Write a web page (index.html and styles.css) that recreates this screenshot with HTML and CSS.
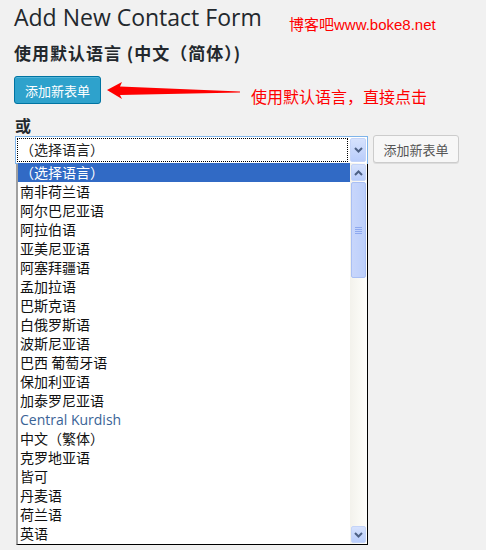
FILE: index.html
```html
<!DOCTYPE html>
<html>
	<head>
		<meta charset="UTF-8">
		<title>Add New Contact Form</title>
		<link rel="stylesheet" href="styles.css">
	</head>
	<body>
		<div class="wrap">
			<h1 class="title">Add New Contact Form</h1>
			<span class="mark">博客吧www.boke8.net</span>
			<h3 class="sub">使用默认语言 (中文（简体）)</h3>
			<div class="row">
				<button class="btn-primary">添加新表单</button>
				<svg class="arrow" width="136" height="20" viewBox="0 0 136 20">
					<polygon points="1,9 16,1 14,5.5 134,10.5 134,11.5 14,14 16,18" fill="#ff0000"/>
				</svg>
				<span class="note">使用默认语言，直接点击</span>
			</div>
			<h3 class="or">或</h3>
			<div class="row2">
				<div class="select">
					<div class="select-val">（选择语言）</div>
					<div class="select-btn">
						<svg width="9" height="6" viewBox="0 0 9 6"><path d="M1 1 L4.5 4.5 L8 1" stroke="#4d6185" stroke-width="2" fill="none"/></svg>
					</div>
				</div>
				<button class="btn">添加新表单</button>
			</div>
			<div class="list">
				<ul class="opts">
					<li class="on">（选择语言）</li>
					<li>南非荷兰语</li>
					<li>阿尔巴尼亚语</li>
					<li>阿拉伯语</li>
					<li>亚美尼亚语</li>
					<li>阿塞拜疆语</li>
					<li>孟加拉语</li>
					<li>巴斯克语</li>
					<li>白俄罗斯语</li>
					<li>波斯尼亚语</li>
					<li>巴西 葡萄牙语</li>
					<li>保加利亚语</li>
					<li>加泰罗尼亚语</li>
					<li class="latin">Central Kurdish</li>
					<li>中文（繁体）</li>
					<li>克罗地亚语</li>
					<li>皆可</li>
					<li>丹麦语</li>
					<li>荷兰语</li>
					<li>英语</li>
				</ul>
				<div class="sb">
					<div class="sb-btn">
						<svg width="9" height="6" viewBox="0 0 9 6"><path d="M1 5 L4.5 1.5 L8 5" stroke="#4d6185" stroke-width="2" fill="none"/></svg>
					</div>
					<div class="sb-thumb"><i></i><i></i><i></i><i></i></div>
					<div class="sb-track"></div>
					<div class="sb-btn">
						<svg width="9" height="6" viewBox="0 0 9 6"><path d="M1 1 L4.5 4.5 L8 1" stroke="#4d6185" stroke-width="2" fill="none"/></svg>
					</div>
				</div>
			</div>
		</div>
	</body>
</html>
```
FILE: styles.css
```css
*{margin: 0;padding: 0;box-sizing: border-box;}
ul,li{list-style: none;}
body{background: #f1f1f1;font-family: "Open Sans","Noto Sans CJK SC",sans-serif;color: #23282d;}
.wrap{position: relative;padding: 2px 0 0 14px;height: 550px;overflow: hidden;}
.title{font-size: 23px;font-weight: 400;line-height: 30px;}
.mark{position: absolute;left: 289px;top: 13px;font-family: "Liberation Sans","Noto Sans CJK SC",sans-serif;font-size: 15px;color: #ff0000;}
.sub{font-size: 17px;font-weight: 700;line-height: 22px;margin-top: 10px;letter-spacing: 1px;font-family: "Noto Sans CJK SC",sans-serif;}
.row{display: flex;align-items: center;margin-top: 12px;height: 28px;}
.btn-primary{width: 87px;height: 28px;background: #2ea2cc;border: 1px solid #0074a2;border-radius: 3px;color: #fff;font-size: 13px;font-family: "Noto Sans CJK SC",sans-serif;box-shadow: inset 0 1px 0 rgba(120,200,230,.5);}
.arrow{margin-left: 5px;margin-top: 2px;}
.note{font-size: 16px;color: #ff0000;margin-left: 9px;margin-top: 11px;font-family: "Noto Sans CJK SC",sans-serif;}
.or{font-size: 16px;font-weight: 700;line-height: 20px;margin-top: 11px;margin-left: 1px;font-family: "Noto Sans CJK SC",sans-serif;}
.row2{display: flex;align-items: flex-start;margin-top: 0;height: 28px;}
.select{display: flex;width: 353px;height: 28px;margin-left: 1px;margin-top: 1px;background: #fff;border: 1px solid #7eb4ea;padding: 1px;}
.select-val{flex: 1;border: 1px dotted #000;font-size: 14px;line-height: 20px;padding-left: 2px;font-family: "Noto Sans CJK SC",sans-serif;color: #222;}
.select-btn{width: 16px;margin-left: 2px;background: linear-gradient(#d6e2fd,#b9cdfb);border: 1px solid #c4d4f8;border-radius: 2px;display: flex;align-items: center;justify-content: center;}
.btn{width: 86px;height: 28px;margin-left: 5px;background: #f7f7f7;border: 1px solid #ccc;border-radius: 3px;color: #555;font-size: 13px;font-family: "Noto Sans CJK SC",sans-serif;box-shadow: 0 1px 0 #ddd;}
.list{display: flex;width: 352px;height: 382px;margin-left: 2px;background: #fff;border-left: 2px solid #a0a0a0;border-right: 1px solid #000;border-bottom: 1px solid #000;}
.opts{flex: 1;font-family: "Noto Sans CJK SC",sans-serif;font-size: 14px;color: #111;}
.opts li{height: 19px;line-height: 19px;padding-left: 2px;white-space: nowrap;}
.opts li.on{background: #316ac5;color: #fff;}
.opts li.latin{font-family: "Open Sans",sans-serif;color: #3a6396;}
.sb{width: 17px;display: flex;flex-direction: column;background: linear-gradient(90deg,#f3f2ec,#fefefb);}
.sb-btn{height: 17px;margin: 1px 1px;background: linear-gradient(#d6e2fd,#b9cdfb);border: 1px solid #c4d4f8;border-radius: 2px;display: flex;align-items: center;justify-content: center;}
.sb-thumb{height: 96px;margin: 0 1px;background: linear-gradient(90deg,#c8d6fb,#bccffb);border: 1px solid #a9bff4;border-radius: 2px;display: flex;flex-direction: column;align-items: center;justify-content: center;gap: 1px;}
.sb-thumb i{display: block;width: 7px;height: 1px;background: #8ea9ef;}
.sb-track{flex: 1;}
```
